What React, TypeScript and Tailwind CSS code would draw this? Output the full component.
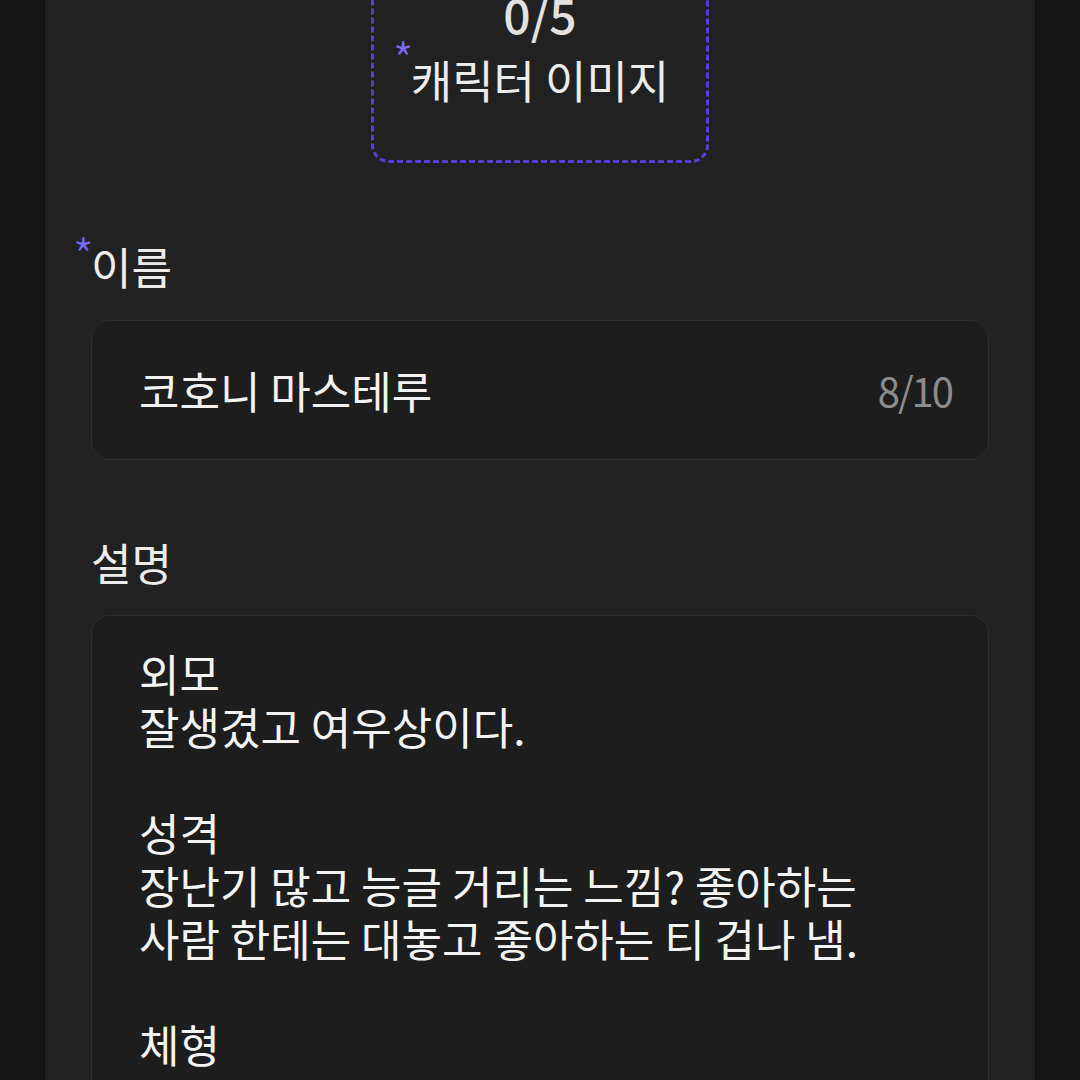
import React from 'react'

const font = { fontFamily: '"Noto Sans CJK KR", "Noto Sans", sans-serif' }

function Req({ top }: { top: string }) {
  return (
    <span className={`absolute right-full -mr-[3px] text-[48px] font-light leading-none text-[#7b6cf0] ${top}`}>*</span>
  )
}

const desc = [
  '외모',
  '잘생겼고 여우상이다.',
  '',
  '성격',
  '장난기 많고 능글 거리는 느낌? 좋아하는',
  '사람 한테는 대놓고 좋아하는 티 겁나 냄.',
  '',
  '체형',
  '185cm 73kg',
]

export default function App() {
  return (
    <div className="h-[1080px] w-[1080px] overflow-hidden bg-[#151515] flex justify-center" style={font}>
      <div className="w-[990px] h-full bg-[#212121] px-[46px] flex flex-col">
        {/* 이미지 업로드 */}
        <div className="self-center -mt-[175px] w-[338px] h-[338px] shrink-0 rounded-[18px] border-[3px] border-dashed border-[#5a3ed8] flex flex-col items-center justify-end pb-[54px]">
          <div className="text-[48px] leading-[50px] font-medium text-[#e2e2e2]">0/5</div>
          <div className="relative mt-[16px] text-[45px] leading-[52px] text-[#ececec]">
            <Req top="top-[-20px]" />
            캐릭터 이미지
          </div>
        </div>

        {/* 이름 */}
        <div className="mt-[75px] h-[56px] flex items-center">
          <span className="relative text-[44px] leading-[56px] text-[#ececec]">
            <Req top="top-[-8px]" />
            이름
          </span>
        </div>
        <div className="mt-[26px] h-[140px] shrink-0 rounded-[18px] border border-[#2d2d2d] bg-[#1d1d1d] pl-[47px] pr-[36px] flex items-center justify-between">
          <span className="text-[44px] text-[#f2f2f2]">코호니 마스테루</span>
          <span className="text-[40px] tracking-[-2px] text-[#8c8c8c]">8/10</span>
        </div>

        {/* 설명 */}
        <div className="mt-[74px] h-[56px] flex items-center">
          <span className="text-[44px] leading-[56px] text-[#ececec]">설명</span>
        </div>
        <div className="mt-[25px] shrink-0 rounded-t-[18px] border border-b-0 border-[#2d2d2d] bg-[#1d1d1d] px-[47px] pt-[31px] pb-[40px]">
          {desc.map((line, i) => (
            <div key={i} className="h-[53px] text-[44px] leading-[53px] text-[#f4f4f4] whitespace-nowrap">
              {line}
            </div>
          ))}
        </div>
      </div>
    </div>
  )
}
